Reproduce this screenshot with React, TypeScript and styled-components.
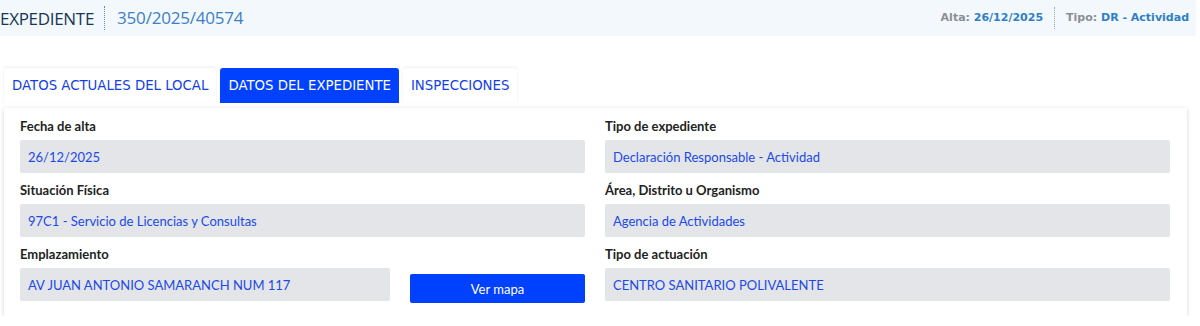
import React from "react";
import styled, { createGlobalStyle } from "styled-components";

const GlobalStyle = createGlobalStyle`
  body {
    margin: 0;
    background: #ffffff;
    font-family: "Lato", "Noto Sans", sans-serif;
  }
`;

const Page = styled.div`
  width: 1196px;
`;

const Header = styled.div`
  display: flex;
  align-items: center;
  justify-content: space-between;
  height: 36px;
  background: #f3f8fc;
`;

const HeaderLeft = styled.div`
  display: flex;
  align-items: center;
  font-family: "Open Sans", sans-serif;
  font-size: 17px;
`;

const HeaderTitle = styled.span`
  color: #173657;
  padding-right: 10px;
  letter-spacing: -0.3px;
`;

const HeaderNumber = styled.span`
  color: #3d7fc4;
  padding-left: 12px;
  border-left: 1px dotted #5a8fc4;
  line-height: 24px;
  letter-spacing: -0.2px;
`;

const HeaderRight = styled.div`
  display: flex;
  align-items: center;
  font-family: "DejaVu Sans", sans-serif;
  font-size: 11px;
  font-weight: bold;
`;

const Meta = styled.span<{ $sep?: boolean }>`
  color: #8a8f95;
  line-height: 22px;
  padding: 0 ${(p) => (p.$sep ? 7 : 11)}px 0 11px;
  ${(p) => (p.$sep ? "border-left: 1px dotted #a0a4a8;" : "")}
`;

const MetaValue = styled.span`
  color: #2f7fc6;
`;

const Tabs = styled.div`
  display: flex;
  gap: 4px;
  margin: 32px 0 0 4px;
`;

const Tab = styled.div<{ $active?: boolean }>`
  height: 35px;
  display: flex;
  align-items: center;
  padding: 0 8px;
  font-family: "DejaVu Sans", sans-serif;
  font-size: 13.3px;
  border-radius: 3px 3px 0 0;
  background: ${(p) => (p.$active ? "#0040ff" : "#ffffff")};
  color: ${(p) => (p.$active ? "#ffffff" : "#1240e6")};
  box-shadow: ${(p) => (p.$active ? "none" : "0 -1px 3px rgba(0,0,0,0.08)")};
`;

const Panel = styled.div`
  margin: 5px 0 0 4px;
  width: 1183px;
  box-sizing: border-box;
  padding: 10px 17px 15px 16px;
  background: #ffffff;
  box-shadow: 0 1px 4px rgba(0, 0, 0, 0.18);
  display: grid;
  grid-template-columns: 1fr 1fr;
  column-gap: 20px;
  row-gap: 9px;
`;

const Field = styled.div`
  display: flex;
  flex-direction: column;
  gap: 5px;
`;

const Label = styled.div`
  font-size: 13px;
  font-weight: bold;
  color: #222222;
  line-height: 17px;
`;

const InputRow = styled.div`
  display: flex;
  align-items: flex-end;
  gap: 20px;
`;

const Value = styled.div<{ $width?: number }>`
  ${(p) => (p.$width ? `flex: 0 0 ${p.$width}px;` : "")}
  height: 33px;
  display: flex;
  align-items: center;
  padding: 0 8px;
  box-sizing: border-box;
  background: #e4e5e9;
  border-radius: 2px;
  color: #1a4ae8;
  font-size: 13px;
`;

const Button = styled.button`
  flex: 1;
  height: 29px;
  margin-bottom: -2px;
  border: none;
  border-radius: 2px;
  background: #0040ff;
  color: #ffffff;
  font-family: "Lato", sans-serif;
  font-size: 13px;
`;

export default function App() {
  return (
    <Page>
      <GlobalStyle />
      <Header>
        <HeaderLeft>
          <HeaderTitle>EXPEDIENTE</HeaderTitle>
          <HeaderNumber>350/2025/40574</HeaderNumber>
        </HeaderLeft>
        <HeaderRight>
          <Meta>
            Alta: <MetaValue>26/12/2025</MetaValue>
          </Meta>
          <Meta $sep>
            Tipo: <MetaValue>DR - Actividad</MetaValue>
          </Meta>
        </HeaderRight>
      </Header>
      <Tabs>
        <Tab>DATOS ACTUALES DEL LOCAL</Tab>
        <Tab $active>DATOS DEL EXPEDIENTE</Tab>
        <Tab>INSPECCIONES</Tab>
      </Tabs>
      <Panel>
        <Field>
          <Label>Fecha de alta</Label>
          <Value>26/12/2025</Value>
        </Field>
        <Field>
          <Label>Tipo de expediente</Label>
          <Value>Declaración Responsable - Actividad</Value>
        </Field>
        <Field>
          <Label>Situación Física</Label>
          <Value>97C1 - Servicio de Licencias y Consultas</Value>
        </Field>
        <Field>
          <Label>Área, Distrito u Organismo</Label>
          <Value>Agencia de Actividades</Value>
        </Field>
        <Field>
          <Label>Emplazamiento</Label>
          <InputRow>
            <Value $width={370}>AV JUAN ANTONIO SAMARANCH NUM 117</Value>
            <Button>Ver mapa</Button>
          </InputRow>
        </Field>
        <Field>
          <Label>Tipo de actuación</Label>
          <Value>CENTRO SANITARIO POLIVALENTE</Value>
        </Field>
      </Panel>
    </Page>
  );
}
